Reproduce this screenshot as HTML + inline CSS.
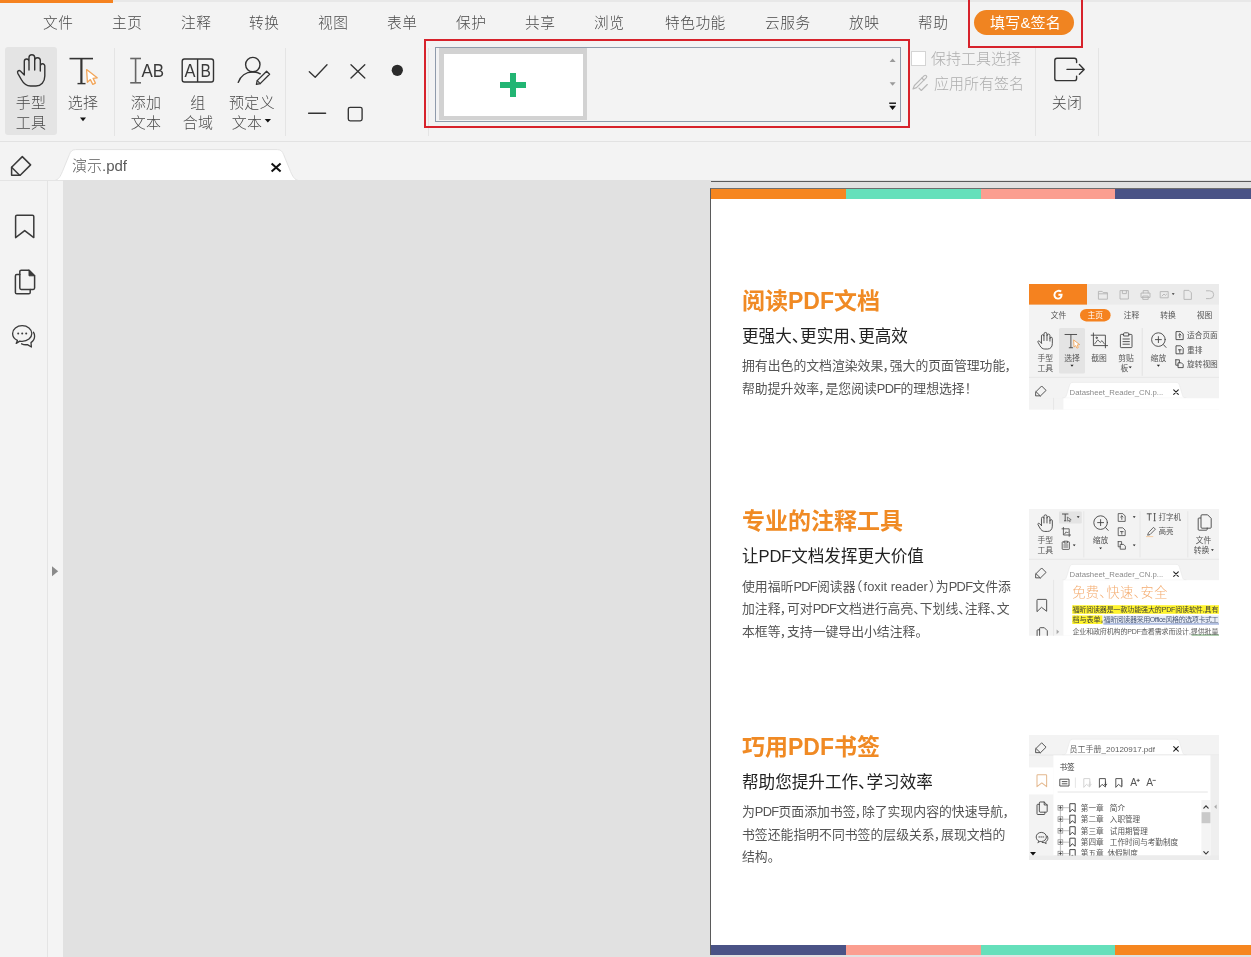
<!DOCTYPE html>
<html lang="zh-CN">
<head>
<meta charset="utf-8">
<title>演示.pdf</title>
<style>
*{box-sizing:border-box;margin:0;padding:0}
html,body{width:1251px;height:957px;overflow:hidden;background:#f3f3f3}
body{position:relative;font-family:"Liberation Sans","Noto Sans CJK SC",sans-serif;color:#4a4a4a;font-weight:300}
#wrap{position:absolute;left:0;top:0;width:1251px;height:957px;will-change:transform;overflow:hidden}
.abs{position:absolute}
.t{position:absolute;white-space:nowrap;line-height:1}
svg{position:absolute;overflow:visible}
/* top strip */
#topbar{left:0;top:0;width:1251px;height:2.4px;background:#e8e8e8}
#toporange{left:0;top:0;width:112.6px;height:2.7px;background:#f5821f}
/* menu */
.m{position:absolute;top:14.5px;font-size:14.7px;line-height:17px;white-space:nowrap;color:#4a4a4a;letter-spacing:0.5px}
/* ribbon */
.sep{position:absolute;top:48px;width:1px;height:88px;background:#e4e4e4}
.lbl{position:absolute;font-size:15px;line-height:19.5px;text-align:center;white-space:nowrap;color:#4a4a4a;letter-spacing:0.3px}
#ribline{left:0;top:141px;width:1251px;height:1px;background:#e2e2e2}
/* doc area */
#gray{left:63px;top:180px;width:1188px;height:777px;background:#e1e1e1}
#strip{left:47px;top:180px;width:16px;height:777px;background:#f4f4f4;border-left:1px solid #e4e4e4}
#page{left:710px;top:188px;width:541px;height:768px;background:#fff;border-left:1px solid #5a5a5a;border-top:1px solid #6e6e6e}
.bar{position:absolute;height:10px}
.h1{position:absolute;left:742px;font-size:23px;line-height:30px;font-weight:700;color:#f08a24;white-space:nowrap}
.h2{position:absolute;left:742px;font-size:16.6px;line-height:24px;font-weight:400;color:#222;white-space:nowrap;font-feature-settings:"palt"}
.p{position:absolute;left:742px;font-size:12.85px;line-height:22.5px;font-weight:400;color:#555;white-space:nowrap;font-feature-settings:"palt"}
.l{letter-spacing:-0.7px}
.h2 .l{letter-spacing:-0.2px}
</style>
</head>
<body>
<div id="wrap">
<div class="abs" id="topbar"></div>
<div class="abs" id="toporange"></div>

<!-- menu -->
<div class="m" style="left:43px">文件</div>
<div class="m" style="left:112px">主页</div>
<div class="m" style="left:181px">注释</div>
<div class="m" style="left:249px">转换</div>
<div class="m" style="left:318px">视图</div>
<div class="m" style="left:387px">表单</div>
<div class="m" style="left:456px">保护</div>
<div class="m" style="left:525px">共享</div>
<div class="m" style="left:594px">浏览</div>
<div class="m" style="left:665px">特色功能</div>
<div class="m" style="left:765px">云服务</div>
<div class="m" style="left:849px">放映</div>
<div class="m" style="left:918px">帮助</div>
<div class="abs" style="left:974px;top:10px;width:100px;height:25px;border-radius:13px;background:#f08421"></div>
<div class="m" style="left:990px;top:14px;color:#fff;font-weight:400;font-size:15px;letter-spacing:0.2px">填写&amp;签名</div>

<!-- ribbon -->
<div class="abs" style="left:5px;top:47px;width:52px;height:88px;background:#e4e4e4;border-radius:3px"></div>
<div class="lbl" style="left:5px;top:93px;width:52px">手型<br>工具</div>
<div class="lbl" style="left:57px;top:93px;width:52px">选择</div>
<div class="sep" style="left:114px"></div>
<div class="lbl" style="left:120px;top:93px;width:52px">添加<br>文本</div>
<div class="lbl" style="left:172px;top:93px;width:52px">组<br>合域</div>
<div class="lbl" style="left:222px;top:93px;width:60px">预定义<br><span style="margin-right:10px">文本</span></div>
<div class="sep" style="left:285px"></div>
<div class="sep" style="left:1035px"></div>
<div class="sep" style="left:1098px"></div>
<div class="lbl" style="left:1037px;top:93px;width:60px">关闭</div>


<!-- ribbon icons -->
<svg style="left:0;top:0" width="1251" height="145" viewBox="0 0 1251 145" fill="none" stroke="#333" stroke-width="1.4" stroke-linecap="round" stroke-linejoin="round">
  <!-- hand -->
  <path d="M24.3 75 L24.3 61.3 a2.35 2.35 0 0 1 4.7 0 L29 70 M29 61 L29 57.6 a2.85 2.85 0 0 1 5.7 0 L34.7 70 M34.7 60.6 a2.8 2.8 0 0 1 5.6 0 L40.3 71 M40.3 66 a2.25 2.25 0 0 1 4.5 0 L44.8 76 C44.8 82 41 86 36 86 L30.5 86 C26.5 86 23.5 83.5 21.3 79.5 L17.8 73.3 C16.8 71.3 18.8 69.6 20.6 71.2 L24.3 75"/>
  <!-- select T -->
  <path d="M69.5 58.6 L93 58.6" stroke-width="1.6" stroke-linecap="butt"/>
  <path d="M81.4 58.6 L81.4 83.6" stroke-width="2.2" stroke-linecap="butt"/>
  <path d="M77.5 83.6 L85.5 83.6" stroke-width="1.4" stroke-linecap="butt"/>
  <path d="M86.6 69.6 L87.4 82.3 L90.4 79.6 L92.8 84.4 L95.4 83.1 L93.1 78.4 L97.2 77.8 Z" fill="#fff" stroke="#f2a65a" stroke-width="1.3"/>
  <path d="M80 117.6 L86 117.6 L83 121.2 Z" fill="#111" stroke="none"/>
  <!-- add text: I-beam + AB -->
  <g stroke="#666" stroke-width="1.6" stroke-linecap="butt">
    <path d="M135.6 58.5 L135.6 82.8"/>
    <path d="M130.2 58.5 L141 58.5"/>
    <path d="M130.2 82.8 L141 82.8"/>
  </g>
  <!-- AB boxed -->
  <rect x="182.2" y="59" width="31.3" height="23" rx="2.2"/>
  <path d="M197.6 59 L197.6 82" stroke-linecap="butt"/>
  <!-- person + pen -->
  <circle cx="252.8" cy="64.6" r="7.2"/>
  <path d="M238.2 82.4 C240.5 76 246 72 252.5 72 C255.5 72 258 72.6 260.3 73.8"/>
  <path d="M266.6 71.2 L269.6 74.2 L260.2 83.6 L256.4 84.4 L257.2 80.6 Z" stroke-width="1.3"/>
  <path d="M257.2 80.6 L260.2 83.6" stroke-width="1.1"/>
  <path d="M264.7 119 L271 119 L267.85 122.6 Z" fill="#111" stroke="none"/>
  <!-- check, x, dot, line, square -->
  <path d="M309.3 71.8 L315.2 77.2 L327 64.8" stroke-width="1.35"/>
  <path d="M351 64.8 L364.8 78 M364.8 64.8 L351 78" stroke-width="1.35"/>
  <circle cx="397.3" cy="70.3" r="5.6" fill="#2b2b2b" stroke="none"/>
  <path d="M308.6 113.2 L325.6 113.2" stroke-width="1.35"/>
  <rect x="348.3" y="107.3" width="13.8" height="13.6" rx="1.8" stroke-width="1.35"/>
  <!-- scroll arrows in signature box -->
  <path d="M889.6 62 L895.6 62 L892.6 58.4 Z" fill="#9a9a9a" stroke="none"/>
  <path d="M889.6 82.2 L895.6 82.2 L892.6 85.8 Z" fill="#9a9a9a" stroke="none"/>
  <path d="M889.2 103.2 L896 103.2" stroke="#111" stroke-width="1.4" stroke-linecap="butt"/>
  <path d="M889.2 105.8 L896 105.8 L892.6 110 Z" fill="#111" stroke="none"/>
  <!-- apply-all pen -->
  <g stroke="#b8b8b8" stroke-width="1.15">
    <path d="M913 89 L914.4 85.5 L924.3 75.6 A1.5 1.5 0 0 1 926.4 77.7 L916.5 87.6 Z"/>
    <path d="M921.8 78 L924 80.2"/>
    <path d="M919 88.2 L921.3 90.5 L927.3 84.5"/>
  </g>
  <!-- close icon -->
  <path d="M1076.6 62.6 L1076.6 60.4 Q1076.6 58.2 1074.4 58.2 L1057 58.2 Q1054.8 58.2 1054.8 60.4 L1054.8 78.4 Q1054.8 80.6 1057 80.6 L1074.4 80.6 Q1076.6 80.6 1076.6 78.4 L1076.6 76.2"/>
  <path d="M1067 69.4 L1084 69.4 M1079.4 64.6 L1084.2 69.4 L1079.4 74.2"/>
  <!-- AB glyphs as real text -->
  <g stroke="none" fill="#3a3a3a" font-family="Liberation Sans, sans-serif" font-size="18.6">
    <text x="141.4" y="77.4" textLength="22.6" lengthAdjust="spacingAndGlyphs">AB</text>
    <text x="184.6" y="77.4" textLength="11" lengthAdjust="spacingAndGlyphs">A</text>
    <text x="200.6" y="77.4" textLength="10.4" lengthAdjust="spacingAndGlyphs">B</text>
  </g>
</svg>

<!-- signature list -->
<div class="abs" style="left:435px;top:47px;width:466px;height:75px;border:1px solid #8f9bab"></div>
<div class="abs" style="left:439px;top:48px;width:148px;height:72px;background:#d2d2d2"></div>
<div class="abs" style="left:444px;top:54px;width:139px;height:62px;background:#fff"></div>
<div class="abs" style="left:500px;top:82px;width:26px;height:6px;background:#22b573"></div>
<div class="abs" style="left:510px;top:73px;width:6px;height:24px;background:#22b573"></div>
<div class="sep" style="left:428px"></div>
<!-- red highlight boxes -->
<div class="abs" style="left:423.5px;top:39.3px;width:486.5px;height:88.6px;border:2.4px solid #d7222b"></div>
<div class="abs" style="left:968.4px;top:-3px;width:114.4px;height:50.6px;border:2.4px solid #d7222b"></div>

<!-- checkbox + texts -->
<div class="abs" style="left:911px;top:51px;width:15px;height:15px;background:#fff;border:1px solid #d4d4d4"></div>
<div class="t" style="left:931px;top:51px;font-size:15px;color:#adadad">保持工具选择</div>
<div class="t" style="left:934px;top:76px;font-size:15px;color:#adadad">应用所有签名</div>

<div class="abs" id="ribline"></div>

<!-- tab bar -->
<svg style="left:0;top:142px" width="400" height="39" viewBox="0 0 400 39">
  <path d="M54.5 38.5 C58.5 38 60.5 34 62.4 29.6 L69.4 12.5 C70.5 9.5 72 7.6 75.5 7.6 L277.5 7.6 C281 7.6 282.5 9.5 283.6 12.5 L290.6 29.6 C292.5 34 294.5 38 298.5 38.5 Z" fill="#fff" stroke="#e2e2e2" stroke-width="1"/>
  <rect x="56" y="38" width="242" height="1" fill="#fff"/>
</svg>
<div class="t" style="left:72px;top:158px;font-size:15px;color:#5a5a5a;font-weight:300">演示.pdf</div>

<!-- doc -->
<div class="abs" id="gray"></div>
<div class="abs" id="strip"></div>
<div class="abs" style="left:711px;top:181px;width:540px;height:1px;background:#5a5a5a"></div>
<div class="abs" id="page"></div>
<div class="bar" style="left:711px;top:189px;width:135px;background:#f6861f"></div>
<div class="bar" style="left:846px;top:189px;width:135px;background:#65e0bb"></div>
<div class="bar" style="left:981px;top:189px;width:134px;background:#fb9e90"></div>
<div class="bar" style="left:1115px;top:189px;width:136px;background:#4a5386"></div>
<div class="bar" style="left:711px;top:945px;width:135px;background:#4a5386"></div>
<div class="bar" style="left:846px;top:945px;width:135px;background:#fb9e90"></div>
<div class="bar" style="left:981px;top:945px;width:134px;background:#65e0bb"></div>
<div class="bar" style="left:1115px;top:945px;width:136px;background:#f6861f"></div>
<div class="abs" style="left:710px;top:955px;width:541px;height:2px;background:#e1e1e1"></div>


<!-- sidebar + tab icons -->
<div class="abs" style="left:0;top:180px;width:63px;height:1px;background:#e4e4e4"></div>
<svg style="left:0;top:140px" width="320" height="817" viewBox="0 140 320 817" fill="none" stroke="#3a3a3a" stroke-width="1.5" stroke-linecap="round" stroke-linejoin="round">
  <!-- pen / highlighter -->
  <path d="M11.6 167.3 L22.3 156.6 L30.6 164.9 L20.2 175.2 L11.6 175.2 Z"/>
  <path d="M11.6 167.3 L19.6 175.2"/>
  <!-- tab close -->
  <path d="M271.6 163.4 L280.6 171.6 M280.6 163.4 L271.6 171.6" stroke="#111" stroke-width="2" stroke-linecap="butt"/>
  <!-- bookmark -->
  <path d="M15.6 237.6 L15.6 216.6 Q15.6 215.2 17 215.2 L32.4 215.2 Q33.8 215.2 33.8 216.6 L33.8 237.6 L24.7 230.6 Z"/>
  <!-- pages -->
  <path d="M19.8 274.6 L16.8 274.6 Q15.4 274.6 15.4 276 L15.4 292.4 Q15.4 293.8 16.8 293.8 L28.8 293.8 Q30.2 293.8 30.2 292.4 L30.2 289.6"/>
  <path d="M19.8 271.6 Q19.8 270.2 21.2 270.2 L29 270.2 L34.6 275.8 L34.6 288 Q34.6 289.4 33.2 289.4 L21.2 289.4 Q19.8 289.4 19.8 288 Z"/>
  <path d="M29 270.2 L29 275.8 L34.6 275.8 Z" fill="#3a3a3a" stroke-width="1"/>
  <!-- comments -->
  <path d="M17.4 340.4 C14.4 339 12.6 336.4 12.6 333.5 C12.6 329.2 16.9 325.7 22.2 325.7 C27.5 325.7 31.8 329.2 31.8 333.5 C31.8 337.8 27.5 341.3 22.2 341.3 C21.3 341.3 20.5 341.2 19.8 341.1 L16.2 343.4 Z" stroke-width="1.3"/>
  <path d="M33.4 332.2 C34.2 333.4 34.6 334.8 34.6 336.2 C34.6 338.8 33.2 341 31 342.6 L31.4 347 L27.4 344.6 C25.6 344.9 23.4 344.6 21.6 343.8" stroke-width="1.3"/>
  <g fill="#3a3a3a" stroke="none"><circle cx="18.2" cy="333.6" r="1"/><circle cx="22.2" cy="333.6" r="1"/><circle cx="26.2" cy="333.6" r="1"/></g>
  <!-- collapse arrow -->
  <path d="M52 566.2 L58.2 571.2 L52 576.2 Z" fill="#8a8a8a" stroke="none"/>
</svg>

<!-- page text -->
<div class="h1" style="top:286px">阅读PDF文档</div>
<div class="h2" style="top:325px">更强大、更实用、更高效</div>
<div class="p" style="top:355px">拥有出色的文档渲染效果，强大的页面管理功能，<br>帮助提升效率，是您阅读<span class="l">PDF</span>的理想选择！</div>

<div class="h1" style="top:505.5px">专业的注释工具</div>
<div class="h2" style="top:545px">让<span class="l">PDF</span>文档发挥更大价值</div>
<div class="p" style="top:575.5px">使用福昕<span class="l">PDF</span>阅读器<span style="letter-spacing:1.6px">（</span>foxit reader<span style="margin-left:1.6px">）</span>为<span class="l">PDF</span>文件添<br>加注释，可对<span class="l">PDF</span>文档进行高亮、下划线、注释、文<br>本框等，支持一键导出小结注释。</div>

<div class="h1" style="top:731.5px">巧用PDF书签</div>
<div class="h2" style="top:770.5px">帮助您提升工作、学习效率</div>
<div class="p" style="top:801px">为<span class="l">PDF</span>页面添加书签，除了实现内容的快速导航，<br>书签还能指明不同书签的层级关系，展现文档的<br>结构。</div>

<!-- MINIS-START -->
<svg style="left:1029px;top:284px;overflow:hidden" width="190" height="126" viewBox="1029 284 190 126" font-family="Liberation Sans, Noto Sans CJK SC, sans-serif" fill="none" stroke-linecap="round">
<rect x="1029" y="284" width="190" height="125.4" fill="#f3f3f3"/>
<rect x="1029" y="284" width="190" height="20.6" fill="#ebebeb"/>
<rect x="1029" y="284" width="58" height="20.6" fill="#f5821f"/>
<path d="M1061.2 291.6 C1059.4 290.2 1056.2 290.6 1054.9 293 C1053.6 295.6 1055 298.4 1057.8 298.6 C1060.2 298.8 1061.6 297 1061.6 294.8 L1058.4 294.8" stroke="#fff" stroke-width="1.9" stroke-linecap="butt"/>
<g stroke="#b4b4b4" stroke-width="0.9" stroke-linejoin="round">
<path d="M1098.8 291.4 h3.4 l1 1.2 h4.2 v6.6 h-8.6 Z M1098.8 293.8 h8.6"/>
<path d="M1120.4 290.6 h8 v8.4 h-8 Z M1122.4 290.6 v3 h4 v-3"/>
<path d="M1143.2 293 v-2.4 h5 v2.4 M1141.4 293 h8.6 v4.4 h-8.6 Z M1143.2 296 h5 v3.4 h-5 Z"/>
<path d="M1160.6 291.6 h7.6 v6.2 h-7.6 Z M1162 296 l2 -2 l1.4 1.4 l1.2 -1.2"/>
<path d="M1184.4 290.4 h4.6 l2.4 2.4 v6.6 h-7 Z"/>
<path d="M1206.4 290.8 h3.4 a3.9 3.9 0 0 1 0 7.8 h-3.4"/>
</g>
<path d="M1171.80 293.35 L1174.60 293.35 L1173.20 295.05 Z" fill="#333" stroke="none"/>
<rect x="1080" y="309" width="30.6" height="12.4" rx="6.2" fill="#f5821f"/>
<g font-size="7.8" fill="#555" stroke="none" font-weight="400">
<text x="1050.8" y="318.2">文件</text>
<text x="1123.8" y="318.2">注释</text>
<text x="1160.2" y="318.2">转换</text>
<text x="1196.8" y="318.2">视图</text>
<text x="1087.5" y="318.2" fill="#fff" font-weight="400">主页</text>
</g>
<rect x="1059" y="328" width="26" height="45.4" rx="1.5" fill="#e4e4e4"/>
<path d="M1142.2 328.4 V375.4" stroke="#e2e2e2" stroke-width="1"/>
<g stroke="#444" stroke-width="1.7" stroke-linejoin="round">
<g transform="translate(1028.59 303.45) scale(0.53)" ><path d="M24.3 75 L24.3 61.3 a2.35 2.35 0 0 1 4.7 0 L29 70 M29 61 L29 57.6 a2.85 2.85 0 0 1 5.7 0 L34.7 70 M34.7 60.6 a2.8 2.8 0 0 1 5.6 0 L40.3 71 M40.3 66 a2.25 2.25 0 0 1 4.5 0 L44.8 76 C44.8 82 41 86 36 86 L30.5 86 C26.5 86 23.5 83.5 21.3 79.5 L17.8 73.3 C16.8 71.3 18.8 69.6 20.6 71.2 L24.3 75"/></g>
<g transform="translate(1027.76 303.44) scale(0.53)" ><path d="M69.5 58.6 L93 58.6 M81.4 58.6 L81.4 83.6 M77.5 83.6 L85.5 83.6" stroke-linecap="butt"/><path d="M86.6 69.6 L87.4 82.3 L90.4 79.6 L92.8 84.4 L95.4 83.1 L93.1 78.4 L97.2 77.8 Z" fill="#fff" stroke="#f2a65a"/></g>
</g>
<g stroke="#444" stroke-width="0.9" stroke-linejoin="round">
<path d="M1093.4 333 V345.6 H1107.6 M1091.2 335.2 H1105.4 V347.8"/>
<path d="M1094.6 344 l3.2 -4.2 l2.4 2.6 l1.8 -1.8 l2.4 3.4" stroke-width="0.8"/><circle cx="1096.6" cy="337.8" r="0.7"/>
<path d="M1123.6 334.4 h-2.4 q-0.8 0 -0.8 0.8 v11.6 q0 0.8 0.8 0.8 h10 q0.8 0 0.8 -0.8 v-11.6 q0 -0.8 -0.8 -0.8 h-2.4 M1123.6 335.6 v-1.8 q0 -1 1 -1 h3.2 q1 0 1 1 v1.8 Z M1123 339 h6.4 M1123 341.6 h6.4 M1123 344.2 h6.4"/>
<circle cx="1158.4" cy="339.6" r="6.8"/><path d="M1163.4 344.6 L1166 347.4 M1155.4 339.6 h6 M1158.4 336.6 v6"/>
<path d="M1176.4 331.6 h4.4 l2.4 2.4 v5.6 h-6.8 Z M1179.8 334 v3.6 M1178.6 335 l1.2 -1.2 l1.2 1.2" />
<path d="M1176.4 345.8 h4.4 l2.4 2.4 v5.6 h-6.8 Z M1178.4 349.8 h2.8 M1179.8 349.8 v2.6"/>
<path d="M1175.8 359.8 h3.6 v3 M1175.8 359.8 v5.4 h2.4 M1178.4 362.8 h3 l1.8 1.8 v3 h-4.8 Z"/>
</g>
<g font-size="7.8" fill="#555" stroke="none" font-weight="400" text-anchor="middle">
<text x="1045.2" y="360.6">手型</text>
<text x="1045.2" y="370.8">工具</text>
<text x="1072" y="360.6">选择</text>
<text x="1099" y="360.6">截图</text>
<text x="1126" y="360.6">剪贴</text>
<text x="1124.4" y="370.8">板</text>
<text x="1158.4" y="360.6">缩放</text>
</g>
<g font-size="7.7" fill="#555" stroke="none" font-weight="400">
<text x="1187" y="338.4">适合页面</text>
<text x="1187" y="352.8">重排</text>
<text x="1187" y="366.6">旋转视图</text>
</g>
<path d="M1070.40 364.85 L1073.60 364.85 L1072.00 366.75 Z" fill="#222" stroke="none"/>
<path d="M1128.60 366.45 L1131.80 366.45 L1130.20 368.35 Z" fill="#222" stroke="none"/>
<path d="M1156.80 364.85 L1160.00 364.85 L1158.40 366.75 Z" fill="#222" stroke="none"/>
<rect x="1029" y="376.8" width="190" height="21.4" fill="#f3f3f3" stroke="none"/>
<path d="M1029 377.3 H1219" stroke="#e6e6e6" stroke-width="1"/>
<path d="M1062.8 398.2 C1065 398.2 1065.8 397.2 1066.4 395.59999999999997 L1069.6 385.00000000000006 C1070.2 383.20000000000005 1071.2 382.40000000000003 1073 382.40000000000003 L1176 382.40000000000003 C1177.8 382.40000000000003 1178.8 383.20000000000005 1179.4 385.00000000000006 L1182.6 395.59999999999997 C1183.2 397.2 1184 398.2 1186 398.2 Z" fill="#fff" stroke="#e8e8e8" stroke-width="0.6"/>
<g stroke="#444" stroke-width="1.7" fill="none" stroke-linejoin="round"><g transform="translate(1029.85 303.00) scale(0.53)" ><path d="M11.6 167.3 L22.3 156.6 L30.6 164.9 L20.2 175.2 L11.6 175.2 Z M11.6 167.3 L19.6 175.2"/></g></g>
<text x="1069.6" y="394.90000000000003" font-size="8" font-weight="400" fill="#8a8a8a" textLength="93.6" lengthAdjust="spacingAndGlyphs">Datasheet_Reader_CN.p...</text>
<path d="M1173.7 389.90000000000003 L1178.3 394.3 M1178.3 389.90000000000003 L1173.7 394.3" stroke="#222" stroke-width="1.1"/>
<rect x="1029" y="398.2" width="34.4" height="11.2" fill="#f3f3f3"/>
<rect x="1063.4" y="398.2" width="155.6" height="11.2" fill="#fff"/>
<path d="M1053.6 398.2 V409.4" stroke="#e6e6e6" stroke-width="1"/>
</svg>
<svg style="left:1029px;top:509px;overflow:hidden" width="190" height="127" viewBox="1029 509 190 127" font-family="Liberation Sans, Noto Sans CJK SC, sans-serif" fill="none" stroke-linecap="round">
<rect x="1029" y="509" width="190" height="126.4" fill="#f3f3f3"/>
<rect x="1059" y="511.4" width="22.8" height="12.2" rx="1" fill="#e4e4e4"/>
<path d="M1083.8 511.6 V557" stroke="#e6e6e6" stroke-width="1"/>
<path d="M1140 511.6 V557" stroke="#e6e6e6" stroke-width="1"/>
<path d="M1187.8 511.6 V557" stroke="#e6e6e6" stroke-width="1"/>
<g stroke="#444" stroke-width="1.7" stroke-linejoin="round">
<g transform="translate(1028.59 485.85) scale(0.53)" ><path d="M24.3 75 L24.3 61.3 a2.35 2.35 0 0 1 4.7 0 L29 70 M29 61 L29 57.6 a2.85 2.85 0 0 1 5.7 0 L34.7 70 M34.7 60.6 a2.8 2.8 0 0 1 5.6 0 L40.3 71 M40.3 66 a2.25 2.25 0 0 1 4.5 0 L44.8 76 C44.8 82 41 86 36 86 L30.5 86 C26.5 86 23.5 83.5 21.3 79.5 L17.8 73.3 C16.8 71.3 18.8 69.6 20.6 71.2 L24.3 75"/></g>
</g>
<g stroke="#444" stroke-width="0.9" stroke-linejoin="round">
<path d="M1062 514 h6.4 M1065.2 514 v6.8 M1064 520.8 h2.4" stroke-linecap="butt"/><path d="M1067.4 517.4 l0.3 3.8 l1 -0.8 l0.8 1.4 l0.8 -0.4 l-0.8 -1.4 l1.3 -0.2 Z" stroke-width="0.6"/>
<path d="M1063.4 527.4 V535 H1070.6 M1062 528.8 H1069.2 V536.4 M1064.6 534 l1.6 -2.2 l1.2 1.2 l1 -1" stroke-width="0.8"/>
<path d="M1064 541.8 h-1.2 q-0.6 0 -0.6 0.6 v6.4 q0 0.6 0.6 0.6 h6 q0.6 0 0.6 -0.6 v-6.4 q0 -0.6 -0.6 -0.6 h-1.2 M1064 542.6 v-1.4 h3.6 v1.4 Z M1063.8 545 h4 M1063.8 547 h4" stroke-width="0.8"/>
<circle cx="1100.6" cy="522.6" r="6.8"/><path d="M1105.6 527.6 L1108.2 530.4 M1097.6 522.6 h6 M1100.6 519.6 v6"/>
<path d="M1118.6 513.6 h4.2 l2.4 2.4 v5.4 h-6.6 Z M1121.8 516 v3.4 M1120.6 517 l1.2 -1.2 l1.2 1.2" stroke-width="0.8"/>
<path d="M1118.6 527.8 h4.2 l2.4 2.4 v5.4 h-6.6 Z M1120.4 531.6 h2.8 M1121.8 531.6 v2.6" stroke-width="0.8"/>
<path d="M1118.2 541.6 h3.4 v2.8 M1118.2 541.6 v5.2 h2.2 M1120.6 544.4 h3 l1.8 1.8 v3 h-4.8 Z" stroke-width="0.8"/>
<path d="M1146.8 513.8 h5 M1149.3 513.8 v6.8 M1153.6 513.6 h2 M1154.6 513.6 v7.2 M1153.6 520.8 h2" stroke-linecap="butt"/>
<path d="M1153.8 527.6 l1.6 1.6 l-5.4 5.4 l-2.4 0.6 l0.8 -2.2 Z" stroke-width="0.8"/><path d="M1146.4 536.6 h6.4" stroke="#f6c89a" stroke-width="0.9"/>
<path d="M1200.6 518 h-1.6 q-0.8 0 -0.8 0.8 v10.6 q0 0.8 0.8 0.8 h7.4 q0.8 0 0.8 -0.8 v-1.4"/><path d="M1201 515.6 q0 -0.8 0.8 -0.8 h5.8 l3.6 3.6 v9 q0 0.8 -0.8 0.8 h-8.6 q-0.8 0 -0.8 -0.8 Z"/>
</g>
<g font-size="7.8" fill="#555" stroke="none" font-weight="400" text-anchor="middle">
<text x="1045.2" y="543.1">手型</text>
<text x="1045.2" y="552.9">工具</text>
<text x="1100.6" y="543.1">缩放</text>
<text x="1203.6" y="543.1">文件</text>
<text x="1201.6" y="552.9">转换</text>
</g>
<g font-size="7.6" fill="#555" stroke="none" font-weight="400">
<text x="1158.4" y="520.1">打字机</text><text x="1158.4" y="534.4">高亮</text>
</g>
<path d="M1076.80 516.35 L1079.60 516.35 L1078.20 518.05 Z" fill="#222" stroke="none"/>
<path d="M1072.80 544.55 L1075.60 544.55 L1074.20 546.25 Z" fill="#222" stroke="none"/>
<path d="M1099.20 547.55 L1102.00 547.55 L1100.60 549.25 Z" fill="#222" stroke="none"/>
<path d="M1132.80 516.35 L1135.60 516.35 L1134.20 518.05 Z" fill="#222" stroke="none"/>
<path d="M1132.80 544.55 L1135.60 544.55 L1134.20 546.25 Z" fill="#222" stroke="none"/>
<path d="M1211.00 549.35 L1213.80 549.35 L1212.40 551.05 Z" fill="#222" stroke="none"/>
<rect x="1029" y="558.8" width="190" height="21.4" fill="#f3f3f3" stroke="none"/>
<path d="M1029 559.3 H1219" stroke="#e6e6e6" stroke-width="1"/>
<path d="M1062.8 580.1999999999999 C1065 580.1999999999999 1065.8 579.1999999999999 1066.4 577.5999999999999 L1069.6 567.0 C1070.2 565.1999999999999 1071.2 564.4 1073 564.4 L1176 564.4 C1177.8 564.4 1178.8 565.1999999999999 1179.4 567.0 L1182.6 577.5999999999999 C1183.2 579.1999999999999 1184 580.1999999999999 1186 580.1999999999999 Z" fill="#fff" stroke="#e8e8e8" stroke-width="0.6"/>
<g stroke="#444" stroke-width="1.7" fill="none" stroke-linejoin="round"><g transform="translate(1029.85 485.00) scale(0.53)" ><path d="M11.6 167.3 L22.3 156.6 L30.6 164.9 L20.2 175.2 L11.6 175.2 Z M11.6 167.3 L19.6 175.2"/></g></g>
<text x="1069.6" y="576.9" font-size="8" font-weight="400" fill="#8a8a8a" textLength="93.6" lengthAdjust="spacingAndGlyphs">Datasheet_Reader_CN.p...</text>
<path d="M1173.7 571.8999999999999 L1178.3 576.3 M1178.3 571.8999999999999 L1173.7 576.3" stroke="#222" stroke-width="1.1"/>
<rect x="1029" y="580.2" width="34.4" height="55.2" fill="#f3f3f3"/>
<rect x="1063.4" y="580.2" width="155.6" height="55.2" fill="#fff"/>
<path d="M1053.6 580.2 V635.4" stroke="#e6e6e6" stroke-width="1"/>
<g stroke="#444" stroke-width="1.7" stroke-linejoin="round">
<g transform="translate(1028.73 485.34) scale(0.53)" ><path d="M15.6 237.6 L15.6 216.6 Q15.6 215.2 17 215.2 L32.4 215.2 Q33.8 215.2 33.8 216.6 L33.8 237.6 L24.7 230.6 Z"/></g>
</g>
<g stroke="#444" stroke-width="0.9" stroke-linejoin="round"><path d="M1039.6 629.8 h-1.8 q-0.7 0 -0.7 0.7 v5 M1039.6 635.4 v-7 q0 -0.7 0.7 -0.7 h4 l3 3 v4.7"/></g>
<path d="M1056.6 629.4 L1059.2 631.8 L1056.6 634.2 Z" fill="#a8a8a8" stroke="none"/>
<text x="1072.2" y="597.4" font-size="13.2" font-weight="300" fill="#f4ac70" stroke="none" style="font-feature-settings:'palt'" textLength="95.2" lengthAdjust="spacing">免费、快速、安全</text>
<rect x="1072.2" y="605.2" width="146.8" height="8.6" fill="#fff42e"/>
<rect x="1072.2" y="615.4" width="30.4" height="8.6" fill="#fff42e"/>
<rect x="1102.6" y="615.4" width="116.4" height="8.6" fill="#e9edf6"/>
<path d="M1103.4 624 H1219" stroke="#5b79c4" stroke-width="0.8" stroke-linecap="butt"/>
<path d="M1191.6 635 H1219" stroke="#3c8a3c" stroke-width="0.8" stroke-linecap="butt"/>
<g font-size="7" fill="#3c3c3c" stroke="none" font-weight="400">
<text x="1072.4" y="612.2" textLength="146" lengthAdjust="spacing">福昕阅读器是一款功能强大的PDF阅读软件,具有</text>
<text x="1072.4" y="622.4" style="font-feature-settings:'palt'">档与表单。</text>
<text x="1103.6" y="622.4" textLength="115" lengthAdjust="spacing" fill="#4a5a7a">福昕阅读器采用Office风格的选项卡式工</text>
<text x="1072.4" y="633.6" textLength="146" lengthAdjust="spacing" fill="#5a5a5a">企业和政府机构的PDF查看需求而设计,提供批量</text>
</g>
</svg>
<svg style="left:1029px;top:735px;overflow:hidden" width="190" height="126" viewBox="1029 735 190 126" font-family="Liberation Sans, Noto Sans CJK SC, sans-serif" fill="none" stroke-linecap="round">
<rect x="1029" y="735" width="190" height="125" fill="#f3f3f3"/>
<rect x="1029" y="733.6" width="190" height="21.4" fill="#f3f3f3" stroke="none"/>
<path d="M1029 734.1 H1219" stroke="#e6e6e6" stroke-width="1"/>
<path d="M1062.8 755.0 C1065 755.0 1065.8 754.0 1066.4 752.4 L1069.6 741.8000000000001 C1070.2 740.0 1071.2 739.2 1073 739.2 L1176 739.2 C1177.8 739.2 1178.8 740.0 1179.4 741.8000000000001 L1182.6 752.4 C1183.2 754.0 1184 755.0 1186 755.0 Z" fill="#fff" stroke="#e8e8e8" stroke-width="0.6"/>
<g stroke="#444" stroke-width="1.7" fill="none" stroke-linejoin="round"><g transform="translate(1029.85 659.80) scale(0.53)" ><path d="M11.6 167.3 L22.3 156.6 L30.6 164.9 L20.2 175.2 L11.6 175.2 Z M11.6 167.3 L19.6 175.2"/></g></g>
<text x="1069.6" y="751.7" font-size="8" font-weight="400" fill="#5e5e5e" textLength="85.4" lengthAdjust="spacingAndGlyphs">员工手册_20120917.pdf</text>
<path d="M1173.7 746.6999999999999 L1178.3 751.1 M1178.3 746.6999999999999 L1173.7 751.1" stroke="#222" stroke-width="1.1"/>
<path d="M1029 755 H1219" stroke="#e6e6e6" stroke-width="1"/>
<rect x="1053.4" y="755.4" width="157.2" height="100.2" fill="#fff"/>
<rect x="1029" y="767.4" width="24.6" height="27" fill="#fff"/>
<rect x="1210.6" y="755.4" width="8.4" height="100.2" fill="#efefef"/>
<rect x="1029" y="855.6" width="190" height="4.4" fill="#ececec"/>
<g stroke="#e3b78c" stroke-width="1.9" stroke-linejoin="round"><g transform="translate(1028.73 660.74) scale(0.53)" ><path d="M15.6 237.6 L15.6 216.6 Q15.6 215.2 17 215.2 L32.4 215.2 Q33.8 215.2 33.8 216.6 L33.8 237.6 L24.7 230.6 Z"/></g></g>
<g stroke="#444" stroke-width="1.7" stroke-linejoin="round">
<g transform="translate(1028.84 658.79) scale(0.53)" ><path d="M19.8 274.6 L16.8 274.6 Q15.4 274.6 15.4 276 L15.4 292.4 Q15.4 293.8 16.8 293.8 L28.8 293.8 Q30.2 293.8 30.2 292.4 L30.2 289.6"/><path d="M19.8 271.6 Q19.8 270.2 21.2 270.2 L29 270.2 L34.6 275.8 L34.6 288 Q34.6 289.4 33.2 289.4 L21.2 289.4 Q19.8 289.4 19.8 288 Z"/><path d="M29 270.2 L29 275.8 L34.6 275.8"/></g>
<g transform="translate(1029.42 659.73) scale(0.53)" ><path d="M17.6 342.2 C14.6 340.6 12.8 337.8 12.8 334.4 C12.8 329.6 17 325.8 22.4 325.8 C27.8 325.8 32 329.6 32 334.4 C32 339.2 27.8 343 22.4 343 C21.6 343 20.8 342.9 20.2 342.8 L16.4 344.6 Z"/><path d="M33.6 332.6 C34.4 334 34.8 335.4 34.8 337 C34.8 339.8 33.2 342.2 30.8 343.6 L31.6 347 L27.8 344.9 C26.6 345.1 25.2 345 24 344.8"/><path d="M17.8 334.4 h1.6 M21.6 334.4 h1.6 M25.4 334.4 h1.6" /></g>
</g>
<path d="M1030.00 852.10 L1036.00 852.10 L1033.00 855.50 Z" fill="#111" stroke="none"/>
<text x="1059.4" y="769.8" font-size="7.6" fill="#333" stroke="none" font-weight="400">书签</text>
<g stroke="#444" stroke-width="0.9" stroke-linejoin="round">
<path d="M1060.2 779.2 h8.8 v6.8 h-8.8 Z M1062.2 781.6 h4.8 M1062.2 783.8 h4.8"/>
<path d="M1075.4 778 V787.4" stroke="#e2e2e2"/>
<path d="M1083.8 787 V778.6 h6 V787 l-3 -2.4 Z" stroke="#cfcfcf"/><path d="M1090.0 782 v3.4 M1088.8 784.2 l1.2 1.4 l1.2 -1.4" stroke="#cfcfcf" stroke-width="0.8"/>
<path d="M1099.4 787 V778.6 h6 V787 l-3 -2.4 Z" stroke="#444"/><path d="M1105.6000000000001 782 v3.4 M1104.4 784.2 l1.2 1.4 l1.2 -1.4" stroke="#444" stroke-width="0.8"/>
<path d="M1115.8 787 V778.6 h6 V787 l-3 -2.4 Z" stroke="#444"/><path d="M1122.0 781 v0.1 M1122.0 783 v0.1 M1122.0 785 v0.1" stroke="#444" stroke-width="1"/>
</g>
<g font-size="10.2" fill="#555" stroke="none" font-weight="400"><text x="1130.2" y="786.4">A</text><text x="1146.2" y="786.4">A</text></g>
<path d="M1137 780.4 h2.4 M1138.2 779.2 v2.4 M1153 780.4 h2.4" stroke="#444" stroke-width="0.8"/>
<path d="M1058 792 H1207.4" stroke="#e4e4e4" stroke-width="1"/>
<path d="M1060.4 807.7 V855.4" stroke="#9a9a9a" stroke-width="0.6"/>
<path d="M1060.4 807.7 H1068.8" stroke="#9a9a9a" stroke-width="0.6"/>
<rect x="1058" y="805.3000000000001" width="4.8" height="4.8" fill="#fff" stroke="#777" stroke-width="0.6"/>
<path d="M1059 807.7 h2.8 M1060.4 806.3000000000001 v2.8" stroke="#222" stroke-width="0.7"/>
<path d="M1069.8 811.7 V803.7 h5.4 V811.7 l-2.7 -2.2 Z" stroke="#333" stroke-width="0.9" stroke-linejoin="round" fill="#fff"/>
<text x="1080.8" y="810.5" font-size="7.6" fill="#555" stroke="none" font-weight="400">第一章</text>
<text x="1109.8" y="810.5" font-size="7.6" fill="#555" stroke="none" font-weight="400">简介</text>
<path d="M1060.4 819.2 H1068.8" stroke="#9a9a9a" stroke-width="0.6"/>
<rect x="1058" y="816.8000000000001" width="4.8" height="4.8" fill="#fff" stroke="#777" stroke-width="0.6"/>
<path d="M1059 819.2 h2.8 M1060.4 817.8000000000001 v2.8" stroke="#222" stroke-width="0.7"/>
<path d="M1069.8 823.2 V815.2 h5.4 V823.2 l-2.7 -2.2 Z" stroke="#333" stroke-width="0.9" stroke-linejoin="round" fill="#fff"/>
<text x="1080.8" y="822.0" font-size="7.6" fill="#555" stroke="none" font-weight="400">第二章</text>
<text x="1109.8" y="822.0" font-size="7.6" fill="#555" stroke="none" font-weight="400">入职管理</text>
<path d="M1060.4 830.7 H1068.8" stroke="#9a9a9a" stroke-width="0.6"/>
<rect x="1058" y="828.3000000000001" width="4.8" height="4.8" fill="#fff" stroke="#777" stroke-width="0.6"/>
<path d="M1059 830.7 h2.8 M1060.4 829.3000000000001 v2.8" stroke="#222" stroke-width="0.7"/>
<path d="M1069.8 834.7 V826.7 h5.4 V834.7 l-2.7 -2.2 Z" stroke="#333" stroke-width="0.9" stroke-linejoin="round" fill="#fff"/>
<text x="1080.8" y="833.5" font-size="7.6" fill="#555" stroke="none" font-weight="400">第三章</text>
<text x="1109.8" y="833.5" font-size="7.6" fill="#555" stroke="none" font-weight="400">试用期管理</text>
<path d="M1060.4 842.2 H1068.8" stroke="#9a9a9a" stroke-width="0.6"/>
<rect x="1058" y="839.8000000000001" width="4.8" height="4.8" fill="#fff" stroke="#777" stroke-width="0.6"/>
<path d="M1059 842.2 h2.8 M1060.4 840.8000000000001 v2.8" stroke="#222" stroke-width="0.7"/>
<path d="M1069.8 846.2 V838.2 h5.4 V846.2 l-2.7 -2.2 Z" stroke="#333" stroke-width="0.9" stroke-linejoin="round" fill="#fff"/>
<text x="1080.8" y="845.0" font-size="7.6" fill="#555" stroke="none" font-weight="400">第四章</text>
<text x="1109.8" y="845.0" font-size="7.6" fill="#555" stroke="none" font-weight="400">工作时间与考勤制度</text>
<path d="M1060.4 853.6 H1068.8" stroke="#9a9a9a" stroke-width="0.6"/>
<rect x="1058" y="851.2" width="4.8" height="4.8" fill="#fff" stroke="#777" stroke-width="0.6"/>
<path d="M1059 853.6 h2.8 M1060.4 852.2 v2.8" stroke="#222" stroke-width="0.7"/>
<path d="M1069.8 857.6 V849.6 h5.4 V857.6 l-2.7 -2.2 Z" stroke="#333" stroke-width="0.9" stroke-linejoin="round" fill="#fff"/>
<text x="1080.8" y="856.4" font-size="7.6" fill="#555" stroke="none" font-weight="400">第五章</text>
<text x="1107.4" y="856.4" font-size="7.6" fill="#555" stroke="none" font-weight="400">休假制度</text>
<rect x="1053.4" y="855.6" width="165.6" height="4.4" fill="#ececec"/>
<rect x="1029" y="860" width="190" height="2" fill="#fff"/>
<rect x="1201.4" y="800" width="9.2" height="55.6" fill="#f4f4f4"/>
<rect x="1201.6" y="812.2" width="8.8" height="11" fill="#c9c9c9"/>
<path d="M1203.8 808.2 L1206 805.8 L1208.2 808.2 M1203.8 851.6 L1206 854 L1208.2 851.6" stroke="#333" stroke-width="1.1" stroke-linejoin="miter"/>
<path d="M1216.6 804.6 L1214.2 806.8 L1216.6 809 Z" fill="#a8a8a8" stroke="none"/>
</svg>
<!-- MINIS-END -->
</div>
</body>
</html>
